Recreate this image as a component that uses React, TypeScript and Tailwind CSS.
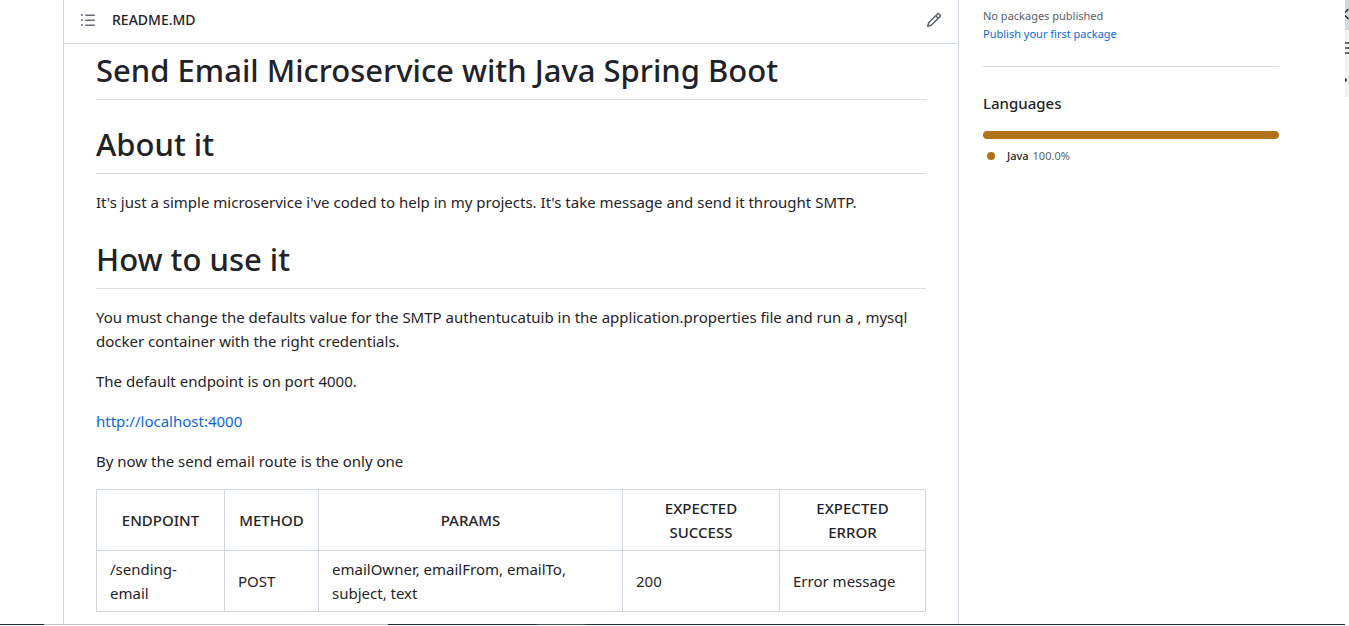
import type { ReactNode } from "react";

function ListIcon() {
  return (
    <svg viewBox="0 0 16 16" className="size-4 fill-[#656d76]" aria-hidden="true">
      <path d="M5.75 2.5h8.5a.75.75 0 0 1 0 1.5h-8.5a.75.75 0 0 1 0-1.5Zm0 5h8.5a.75.75 0 0 1 0 1.5h-8.5a.75.75 0 0 1 0-1.5Zm0 5h8.5a.75.75 0 0 1 0 1.5h-8.5a.75.75 0 0 1 0-1.5ZM2 14a1 1 0 1 1 0-2 1 1 0 0 1 0 2Zm1-6a1 1 0 1 1-2 0 1 1 0 0 1 2 0ZM2 4a1 1 0 1 1 0-2 1 1 0 0 1 0 2Z" />
    </svg>
  );
}

function PencilIcon() {
  return (
    <svg viewBox="0 0 16 16" className="size-4 fill-[#57606a]" aria-hidden="true">
      <path d="M11.013 1.427a1.75 1.75 0 0 1 2.474 0l1.086 1.086a1.75 1.75 0 0 1 0 2.474l-8.61 8.61c-.21.21-.47.364-.756.445l-3.251.93a.75.75 0 0 1-.927-.928l.929-3.25c.081-.286.235-.547.445-.758l8.61-8.61Zm.176 4.823L9.75 4.81l-6.286 6.287a.253.253 0 0 0-.064.108l-.558 1.953 1.953-.558a.253.253 0 0 0 .108-.064Zm1.238-3.763a.25.25 0 0 0-.354 0L10.811 3.75l1.439 1.44 1.263-1.263a.25.25 0 0 0 0-.354Z" />
    </svg>
  );
}

function Heading({ children }: { children: ReactNode }) {
  return (
    <h1 className="border-b border-[#d8dee4] pb-[9px] text-[31px] leading-10 font-medium">
      {children}
    </h1>
  );
}

function Section({ title, children }: { title: string; children: ReactNode }) {
  return (
    <section className="mt-6">
      <Heading>{title}</Heading>
      <div className="flex flex-col gap-4 pt-4 pb-px">{children}</div>
    </section>
  );
}

const columns = [
  { label: "ENDPOINT", width: "w-[128px]" },
  { label: "METHOD", width: "w-[94px]" },
  { label: "PARAMS", width: "w-auto" },
  { label: "EXPECTED SUCCESS", width: "w-[157px]" },
  { label: "EXPECTED ERROR", width: "w-[146px]" },
];

const row = [
  "/sending-email",
  "POST",
  "emailOwner, emailFrom, emailTo, subject, text",
  "200",
  "Error message",
];

export default function App() {
  return (
    <div className="relative flex min-h-screen flex-col bg-white pb-px font-['Noto_Sans','Open_Sans',sans-serif] text-[15px] leading-6 text-[#1f2328]">
      <div className="flex flex-1 gap-6 pr-[70px] pl-[63px]">
        <main className="min-w-0 flex-1 border-x border-[#d0d7de]">
          <header className="flex h-11 items-center justify-between border-b border-[#d0d7de] px-4 pb-1">
            <div className="flex items-center gap-4">
              <button type="button" aria-label="Outline">
                <ListIcon />
              </button>
              <h2 className="text-sm leading-5 font-medium">README.MD</h2>
            </div>
            <button type="button" aria-label="Edit file">
              <PencilIcon />
            </button>
          </header>
          <article className="px-8 pt-1.5">
            <Heading>Send Email Microservice with Java Spring Boot</Heading>
            <Section title="About it">
              <p>
                It's just a simple microservice i've coded to help in my projects. It's take message
                and send it throught SMTP.
              </p>
            </Section>
            <Section title="How to use it">
              <p>
                You must change the defaults value for the SMTP authentucatuib in the
                application.properties file and run a , mysql docker container with the right
                credentials.
              </p>
              <p>The default endpoint is on port 4000.</p>
              <p>
                <a href="http://localhost:4000" className="text-[#0969da]">
                  http://localhost:4000
                </a>
              </p>
              <p>By now the send email route is the only one</p>
              <table className="w-full table-fixed border-collapse">
                <thead>
                  <tr>
                    {columns.map((c) => (
                      <th
                        key={c.label}
                        scope="col"
                        className={`${c.width} border border-[#d0d7de] px-3 py-1.5 text-center font-medium`}
                      >
                        {c.label}
                      </th>
                    ))}
                  </tr>
                </thead>
                <tbody>
                  <tr>
                    {row.map((cell) => (
                      <td key={cell} className="border border-[#d0d7de] px-[13px] py-1.5">
                        {cell}
                      </td>
                    ))}
                  </tr>
                </tbody>
              </table>
            </Section>
          </article>
        </main>

        <aside className="w-[296px] shrink-0 pt-[7px] text-[11px] leading-[18px]">
          <div className="border-b border-[#d8dee4] pb-[23px]">
            <p className="text-[#57606a]">No packages published</p>
            <a href="#publish" className="block text-[#0969da]">
              Publish your first package
            </a>
          </div>
          <h2 className="mt-6 text-[15px] leading-6 font-medium">Languages</h2>
          <div className="mt-4 h-2 rounded-full bg-[#b07219]" />
          <ul className="mt-2">
            <li className="flex items-center gap-1 pl-1">
              <span className="mr-2 size-2 rounded-full bg-[#b07219]" />
              <span className="font-medium">Java</span>
              <span className="text-[#57606a]">100.0%</span>
            </li>
          </ul>
        </aside>
      </div>

      <div className="flex h-px bg-[#1f2d3a]">
        <div className="w-11" />
        <div className="w-[344px] bg-[#c0c4bc]" />
        <div className="w-[149px]" />
        <div className="w-12 bg-[#44565f]" />
        <div className="flex-1" />
        <div className="w-1 bg-white" />
      </div>

      <svg
        viewBox="0 0 4 97"
        className="absolute top-0 right-0 h-[97px] w-1"
        aria-hidden="true"
      >
        <path d="M0 0h4v30H0z" fill="#d2d7db" />
        <path d="M0 30h4v67H0z" fill="#f2f2f2" />
        <path d="M3.5 9 0 12.5M0 15.5 3.5 19" fill="none" stroke="#24292f" strokeWidth="1.4" />
        <path d="M0 42h4v2H0zM0 47h4v2H0zM0 52h4v2H0z" fill="#6b6b6b" />
        <path d="M0 78h1v1h1v2H1v1H0z" fill="#444" />
      </svg>
    </div>
  );
}
